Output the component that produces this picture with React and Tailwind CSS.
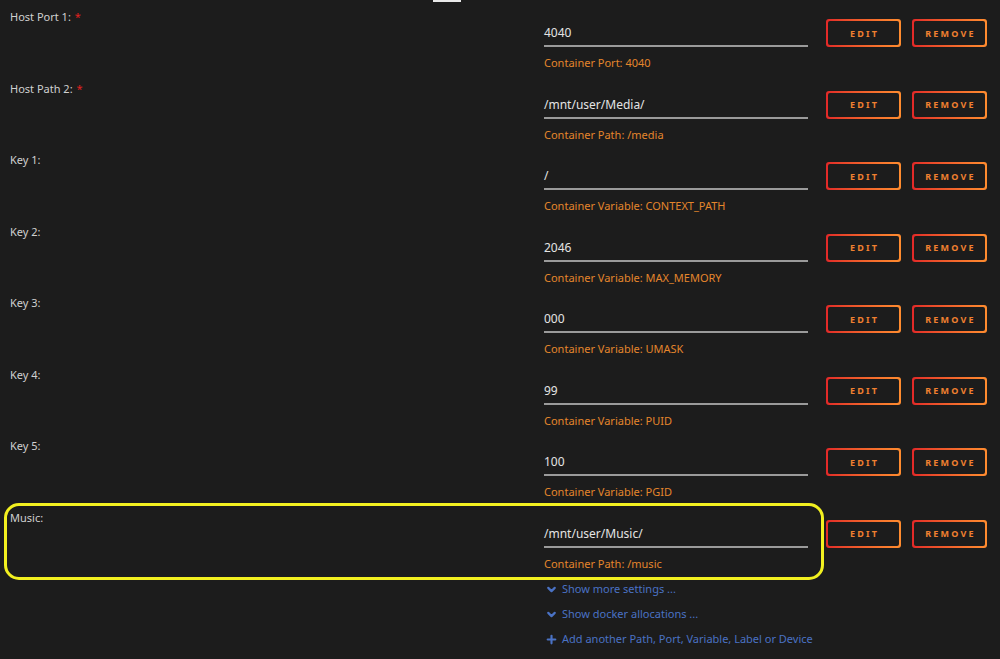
import { ChevronDown, Plus } from 'lucide-react';

const rows = [
  { label: 'Host Port 1:', required: true, value: '4040', hint: 'Container Port: 4040' },
  { label: 'Host Path 2:', required: true, value: '/mnt/user/Media/', hint: 'Container Path: /media' },
  { label: 'Key 1:', value: '/', hint: 'Container Variable: CONTEXT_PATH' },
  { label: 'Key 2:', value: '2046', hint: 'Container Variable: MAX_MEMORY' },
  { label: 'Key 3:', value: '000', hint: 'Container Variable: UMASK' },
  { label: 'Key 4:', value: '99', hint: 'Container Variable: PUID' },
  { label: 'Key 5:', value: '100', hint: 'Container Variable: PGID' },
  { label: 'Music:', value: '/mnt/user/Music/', hint: 'Container Path: /music', marked: true },
];

function GradientButton({ children }) {
  return (
    <div className="flex w-[75px] h-[28px] p-[2px] rounded-[3px] bg-linear-to-r from-[#e22828] to-[#ff8c2f] cursor-pointer">
      <div className="flex-1 flex items-center justify-center rounded-[2px] bg-[#1c1c1c] text-[#f08030] text-[9px] leading-none font-bold tracking-[2.2px] pl-[2px]">
        {children}
      </div>
    </div>
  );
}

function ConfigRow({ row }) {
  return (
    <div className="relative flex h-[71.5px] pl-[10px]">
      {row.marked && (
        <div className="absolute left-[4px] top-[-7.5px] w-[820px] h-[77px] border-[3px] border-[#f2f020] rounded-[15px] pointer-events-none" />
      )}
      <div className="w-[534px] text-[11px] leading-[14px] text-[#d0d0d0]">
        {row.label}
        {row.required && <span className="text-[#e0201f] ml-[4px]">*</span>}
      </div>
      <div className="w-[264px]">
        <div className="mt-[14px] h-[23px] pb-[3px] border-b-2 border-[#9a9a9a] text-[12px] leading-[18px] text-[#e4e4e4]">
          {row.value}
        </div>
        <div className="mt-[8px] text-[11px] leading-[16px] text-[#e4862c]">{row.hint}</div>
      </div>
      <div className="ml-[18px] mt-[9px] flex gap-[11px] h-[28px]">
        <GradientButton>EDIT</GradientButton>
        <GradientButton>REMOVE</GradientButton>
      </div>
    </div>
  );
}

export default function App() {
  return (
    <div className="min-h-[659px] bg-[#1c1c1c] font-['Noto_Sans',sans-serif] overflow-hidden">
      <div className="h-[2px] flex">
        <div className="ml-[433px] w-[28px] bg-[#e8e8e8]" />
      </div>
      <div className="pt-[8px]">
        {rows.map((row) => (
          <ConfigRow key={row.label} row={row} />
        ))}
      </div>
      <div className="pl-[545px] flex flex-col gap-[11px] text-[11px] leading-[14px] text-[#4a72c4]">
        <div className="flex items-center gap-[4px]">
          <ChevronDown size={13} strokeWidth={4} />
          <span>Show more settings ...</span>
        </div>
        <div className="flex items-center gap-[4px]">
          <ChevronDown size={13} strokeWidth={4} />
          <span>Show docker allocations ...</span>
        </div>
        <div className="flex items-center gap-[4px]">
          <Plus size={13} strokeWidth={4} />
          <span>Add another Path, Port, Variable, Label or Device</span>
        </div>
      </div>
    </div>
  );
}
